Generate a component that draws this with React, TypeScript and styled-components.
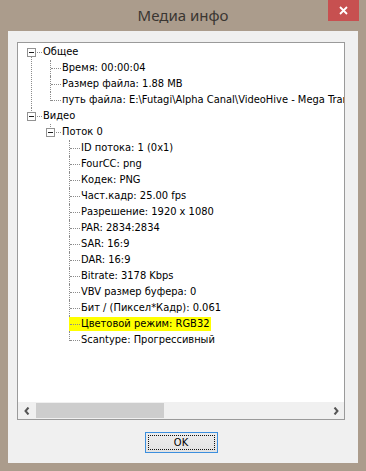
import { createGlobalStyle, styled } from "styled-components";

type TreeData = { label: string; children?: TreeData[]; highlight?: boolean };

const tree: TreeData[] = [
  {
    label: "Общее",
    children: [
      { label: "Время: 00:00:04" },
      { label: "Размер файла: 1.88 MB" },
      { label: "путь файла: E:\\Futagi\\Alpha Canal\\VideoHive - Mega Transitions\\preview.mov" },
    ],
  },
  {
    label: "Видео",
    children: [
      {
        label: "Поток 0",
        children: [
          { label: "ID потока: 1 (0x1)" },
          { label: "FourCC: png" },
          { label: "Кодек: PNG" },
          { label: "Част.кадр: 25.00 fps" },
          { label: "Разрешение: 1920 x 1080" },
          { label: "PAR: 2834:2834" },
          { label: "SAR: 16:9" },
          { label: "DAR: 16:9" },
          { label: "Bitrate: 3178 Kbps" },
          { label: "VBV размер буфера: 0" },
          { label: "Бит / (Пиксел*Кадр): 0.061" },
          { label: "Цветовой режим: RGB32", highlight: true },
          { label: "Scantype: Прогрессивный" },
        ],
      },
    ],
  },
];

const GlobalStyle = createGlobalStyle`
  html, body {
    margin: 0;
    padding: 0;
    background: #ab9c8c;
  }
`;

const Window = styled.div`
  width: 366px;
  height: 471px;
  background: #ab9c8c;
  display: flex;
  flex-direction: column;
  font-family: "DejaVu Sans Condensed", "DejaVu Sans", sans-serif;
`;

const TitleBar = styled.div`
  height: 31px;
  display: grid;
  grid-template-columns: 1fr auto 1fr;
  align-items: center;
  padding-right: 7px;
`;

const Title = styled.div`
  grid-column: 2;
  font-family: "Noto Sans", "Open Sans", sans-serif;
  font-size: 15px;
  color: #3a3632;
  margin: -2px 0 0 7px;
`;

const CloseButton = styled.div`
  grid-column: 3;
  justify-self: end;
  align-self: start;
  width: 31px;
  height: 21px;
  background: #c75050;
  display: flex;
  align-items: center;
  justify-content: center;
`;

const Client = styled.div`
  flex: 1;
  margin: 0 8px 8px 8px;
  background: #f0f0f0;
  display: flex;
  flex-direction: column;
  padding: 11px 13px 10px 9px;
`;

const TreeBox = styled.div`
  height: 378px;
  box-sizing: border-box;
  border: 1px solid #9a9a9a;
  background: #fff;
  display: flex;
  flex-direction: column;
`;

const Viewport = styled.div`
  flex: 1;
  overflow: hidden;
  padding-top: 1px;
`;

const Branch = styled.ul`
  list-style: none;
  margin: 0;
  padding: 0 0 0 19px;
`;

const RootList = styled(Branch)`
  padding-left: 0;
`;

const Item = styled.li<{ $rootFirst?: boolean; $last?: boolean }>`
  position: relative;
  white-space: nowrap;

  &::before {
    content: "";
    position: absolute;
    left: 13px;
    top: ${(p) => (p.$rootFirst ? "8px" : "0")};
    ${(p) => (p.$last ? "height: 9px;" : "bottom: 0;")}
    border-left: 1px dotted #8c8c8c;
  }
`;

const Row = styled.div`
  position: relative;
  display: flex;
  align-items: center;
  height: 16px;

  &::after {
    content: "";
    position: absolute;
    left: 14px;
    top: 8px;
    width: 10px;
    border-top: 1px dotted #8c8c8c;
  }
`;

const Gutter = styled.div`
  width: 25px;
  height: 16px;
  flex: none;
  display: flex;
`;

const Expander = styled.span`
  position: relative;
  z-index: 1;
  box-sizing: border-box;
  width: 9px;
  height: 9px;
  margin: 4px 0 0 9px;
  border: 1px solid #929292;
  background: #fff;
  display: flex;
  align-items: center;
  justify-content: center;

  &::after {
    content: "";
    width: 5px;
    height: 1px;
    background: #1e1e1e;
  }
`;

const Label = styled.span<{ $highlight?: boolean }>`
  height: 14px;
  line-height: 14px;
  font-size: 11px;
  color: #000;
  padding: 0 2px 0 ${(p) => (p.$highlight ? "12px" : "2px")};
  margin-left: ${(p) => (p.$highlight ? "-12px" : "-2px")};
  background: ${(p) => (p.$highlight ? "#ffff00" : "transparent")};
`;

const ScrollBar = styled.div`
  height: 17px;
  flex: none;
  display: flex;
  align-items: center;
  background: #f0f0f0;
`;

const ArrowButton = styled.div`
  width: 17px;
  height: 17px;
  flex: none;
  display: flex;
  align-items: center;
  justify-content: center;
`;

const Track = styled.div`
  flex: 1;
  height: 17px;
  display: flex;
  align-items: center;
`;

const Thumb = styled.div`
  width: 128px;
  height: 15px;
  margin-left: 1px;
  background: #cdcdcd;
`;

const Footer = styled.div`
  flex: 1;
  display: flex;
  align-items: flex-end;
  justify-content: center;
`;

const OkButton = styled.button`
  width: 73px;
  height: 21px;
  padding: 2px;
  box-sizing: border-box;
  border: 1px solid #3c8fde;
  background: linear-gradient(#ececec, #e3e3e3);
  font-family: "DejaVu Sans Condensed", "DejaVu Sans", sans-serif;
  font-size: 11px;
  color: #000;
  display: flex;
  cursor: pointer;
`;

const FocusRing = styled.span`
  flex: 1;
  border: 1px dotted #111;
  display: flex;
  align-items: center;
  justify-content: center;
`;

const Chevron = ({ dir }: { dir: "left" | "right" }) => (
  <svg width="6" height="8" viewBox="0 0 6 8">
    <polyline
      points={dir === "left" ? "4.5,0.5 1.5,4 4.5,7.5" : "1.5,0.5 4.5,4 1.5,7.5"}
      fill="none"
      stroke="#555"
      strokeWidth="2"
    />
  </svg>
);

const TreeNode = ({
  node,
  root,
  first,
  last,
}: {
  node: TreeData;
  root?: boolean;
  first?: boolean;
  last?: boolean;
}) => (
  <Item $rootFirst={root && first} $last={last}>
    <Row>
      <Gutter>{node.children && <Expander />}</Gutter>
      <Label $highlight={node.highlight}>{node.label}</Label>
    </Row>
    {node.children && (
      <Branch>
        {node.children.map((child, i) => (
          <TreeNode
            key={child.label}
            node={child}
            first={i === 0}
            last={i === node.children!.length - 1}
          />
        ))}
      </Branch>
    )}
  </Item>
);

export default function App() {
  return (
    <>
      <GlobalStyle />
      <Window>
        <TitleBar>
          <Title>Медиа инфо</Title>
          <CloseButton>
            <svg width="9" height="9" viewBox="0 0 9 9">
              <path d="M1 1 L8 8 M8 1 L1 8" stroke="#fff" strokeWidth="1.8" />
            </svg>
          </CloseButton>
        </TitleBar>
        <Client>
          <TreeBox>
            <Viewport>
              <RootList>
                {tree.map((node, i) => (
                  <TreeNode
                    key={node.label}
                    node={node}
                    root
                    first={i === 0}
                    last={i === tree.length - 1}
                  />
                ))}
              </RootList>
            </Viewport>
            <ScrollBar>
              <ArrowButton>
                <Chevron dir="left" />
              </ArrowButton>
              <Track>
                <Thumb />
              </Track>
              <ArrowButton>
                <Chevron dir="right" />
              </ArrowButton>
            </ScrollBar>
          </TreeBox>
          <Footer>
            <OkButton>
              <FocusRing>OK</FocusRing>
            </OkButton>
          </Footer>
        </Client>
      </Window>
    </>
  );
}
